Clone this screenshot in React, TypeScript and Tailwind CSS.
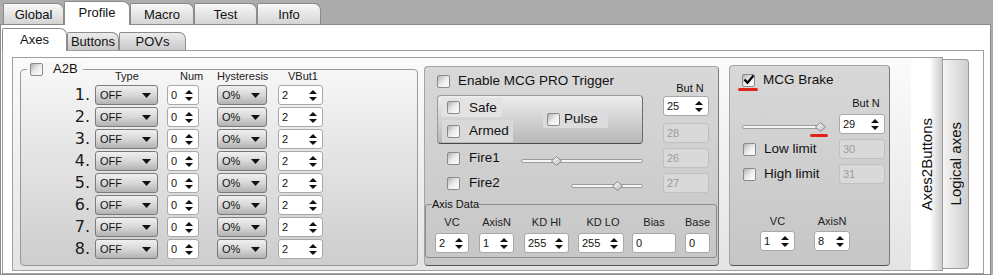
import React from "react";

function Check({ checked = false }: { checked?: boolean }) {
  return (
    <span className="relative block w-[13px] h-[13px] shrink-0 rounded-[2px] border border-[#8a8a8a] bg-linear-to-br from-[#b4b4b4] via-[#ececec] to-white">
      {checked && (
        <svg className="absolute left-[0px] top-[-1px]" width="12" height="11" viewBox="0 0 12 11">
          <path d="M1.5 5.5 L4.5 8.8 L10.5 1.5" stroke="#000" strokeWidth="2.2" fill="none" />
        </svg>
      )}
    </span>
  );
}

function Drop({ text, w }: { text: string; w: string }) {
  return (
    <div
      className={`${w} h-[20px] flex items-center justify-between rounded-[3px] border border-[#7a7a7a] bg-linear-to-b from-[#f0f0f0] via-[#d8d8d8] to-[#b2b2b2] pl-[4px] pr-[6px] text-[11px] leading-none`}
    >
      <span>{text}</span>
      <svg width="9" height="5" viewBox="0 0 9 5">
        <path d="M0 0H9L4.5 5Z" fill="#111" />
      </svg>
    </div>
  );
}

function Spin({ v, w }: { v: string; w: string }) {
  return (
    <div
      className={`${w} h-[20px] flex items-center justify-between rounded-[3px] border border-[#a8a8a8] bg-white pl-[3px] pr-[5px] text-[11px] leading-none`}
    >
      <span>{v}</span>
      <svg width="8" height="11" viewBox="0 0 8 11">
        <path d="M4 0L8 4H0Z M0 7H8L4 11Z" fill="#111" />
      </svg>
    </div>
  );
}

function Field({ v, w }: { v: string; w: string }) {
  return (
    <div className={`${w} h-[20px] flex items-center rounded-[3px] border border-[#a8a8a8] bg-white pl-[3px] text-[11px] leading-none`}>
      {v}
    </div>
  );
}

function Dis({ v }: { v: string }) {
  return (
    <div className="w-[46px] h-[20px] flex items-center rounded-[3px] border border-[#c0c0c0] bg-[#d9d9d9] pl-[3px] text-[11px] leading-none text-[#9c9c9c]">
      {v}
    </div>
  );
}

function Slider({ w, thumb, mark = false }: { w: string; thumb: string; mark?: boolean }) {
  return (
    <div className={`relative h-[10px] ${w}`}>
      <div className="absolute left-0 right-0 top-[3px] h-[4px] rounded-full border border-[#9c9c9c] bg-[#f6f6f6]" />
      <svg className={`absolute top-0 ${thumb}`} width="11" height="10" viewBox="0 0 11 10">
        <defs>
          <linearGradient id="tg" x1="0" y1="0" x2="1" y2="1">
            <stop offset="0" stopColor="#ffffff" />
            <stop offset="1" stopColor="#b8b8b8" />
          </linearGradient>
        </defs>
        <path d="M5.5 0.5 L10.5 5 L5.5 9.5 L0.5 5 Z" fill="url(#tg)" stroke="#8a8a8a" />
      </svg>
      {mark && <span className="absolute left-[68px] top-[12px] w-[18px] h-[3px] rounded-full bg-[#e2231a]" />}
    </div>
  );
}

function TopTab({ label, w, active = false }: { label: string; w: string; active?: boolean }) {
  return active ? (
    <div
      className={`${w} h-[24px] -mb-[1px] relative z-10 flex justify-center pt-[3px] rounded-tl-[2px] rounded-tr-[7px] border border-b-0 border-[#8b8b8b] bg-white text-[13px] leading-[15px]`}
    >
      {label}
    </div>
  ) : (
    <div
      className={`${w} h-[21px] flex justify-center pt-[3px] rounded-tl-[2px] rounded-tr-[7px] border border-b-0 border-[#8b8b8b] bg-linear-to-b from-[#f8f8f8] to-[#d4d4d4] text-[13px] leading-[15px]`}
    >
      {label}
    </div>
  );
}

function SubTab({ label, w, active = false }: { label: string; w: string; active?: boolean }) {
  return active ? (
    <div
      className={`${w} h-[23px] -mb-[1px] flex justify-center pt-[3px] rounded-tl-[2px] rounded-tr-[7px] border border-b-0 border-[#8b8b8b] bg-white text-[13px] leading-[15px]`}
    >
      {label}
    </div>
  ) : (
    <div
      className={`${w} h-[18px] flex justify-center pt-[1px] rounded-tl-[2px] rounded-tr-[7px] border border-b-0 border-[#8b8b8b] bg-linear-to-b from-[#ececec] to-[#c9c9c9] text-[13px] leading-[15px]`}
    >
      {label}
    </div>
  );
}

const rows = [1, 2, 3, 4, 5, 6, 7, 8];

export default function App() {
  return (
    <div className="w-[993px] h-[275px] overflow-hidden bg-[#acacac] flex flex-col font-['Liberation_Sans',Arial,sans-serif] text-[#111]">
      {/* top tabs */}
      <div className="h-[24px] shrink-0 flex items-end pl-[3px] relative z-10">
        <TopTab label="Global" w="w-[61px]" />
        <TopTab label="Profile" w="w-[66px]" active />
        <TopTab label="Macro" w="w-[64px]" />
        <TopTab label="Test" w="w-[63px]" />
        <TopTab label="Info" w="w-[64px]" />
      </div>

      {/* main panel */}
      <div className="flex-1 min-h-0 w-[991px] bg-white border border-[#8b8b8b] flex flex-col">
        <div className="h-[25px] shrink-0 flex items-end pl-[1px] relative z-10">
          <SubTab label="Axes" w="w-[65px]" active />
          <SubTab label="Buttons" w="w-[52px]" />
          <SubTab label="POVs" w="w-[67px]" />
        </div>

        <div className="ml-[1px] w-[982px] flex-1 border border-[#a0a0a0] bg-white">
          <div className="ml-[9px] mt-[6px] flex items-start">
            {/* page */}
            <div className="w-[899px] h-[214px] border border-r-0 border-[#a0a0a0] bg-linear-to-b from-[#fbfbfb] to-[#e4e4e4] flex items-start pl-[7px]">
              {/* A2B group */}
              <div className="relative mt-[11px] w-[398px] h-[197px] rounded-[4px] border border-[#9a9a9a] bg-linear-to-b from-[#f7f7f7] to-[#cdcdcd]">
                <div className="absolute left-[6px] top-[-8px] h-[14px] flex items-center pl-[3px] pr-[5px] bg-[#f7f7f7]">
                  <Check />
                  <span className="ml-[10px] text-[13px] leading-[14px]">A2B</span>
                </div>
                <div className="flex h-[12px] text-[11px] leading-[12px] text-[#222]">
                  <div className="w-[69px]" />
                  <div className="ml-[5px] w-[63px] pl-[20px]">Type</div>
                  <div className="ml-[9px] w-[32px] pl-[13px] whitespace-nowrap">Num</div>
                  <div className="ml-[18px] w-[50px] whitespace-nowrap">Hysteresis</div>
                  <div className="ml-[11px] w-[45px] pl-[10px]">VBut1</div>
                </div>
                <div className="mt-[3px] flex flex-col gap-[2px]">
                  {rows.map((n) => (
                    <div key={n} className="flex items-center h-[20px]">
                      <div className="w-[69px] text-right font-['DejaVu_Sans',sans-serif] text-[16px] leading-[20px] text-[#1a1a1a]">
                        {n}.
                      </div>
                      <div className="ml-[5px]">
                        <Drop text="OFF" w="w-[63px]" />
                      </div>
                      <div className="ml-[9px]">
                        <Spin v="0" w="w-[32px]" />
                      </div>
                      <div className="ml-[18px]">
                        <Drop text="O%" w="w-[50px]" />
                      </div>
                      <div className="ml-[11px]">
                        <Spin v="2" w="w-[45px]" />
                      </div>
                    </div>
                  ))}
                </div>
              </div>

              {/* MCG PRO Trigger panel */}
              <div className="ml-[6px] mt-[8px] w-[295px] h-[200px] rounded-[4px] border border-[#a4a4a4] border-r-[#7a7a7a] border-b-[#555555] bg-linear-to-b from-[#d8d8d8] to-[#c6c6c6] flex flex-col">
                <div className="flex pl-[12px] pt-[7px]">
                  <div className="w-[206px] flex flex-col">
                    <div className="flex items-center h-[14px]">
                      <Check />
                      <span className="ml-[8px] text-[13.5px] leading-[14px]">Enable MCG PRO Trigger</span>
                    </div>
                    <div className="mt-[7px] h-[49px] rounded-[4px] border border-[#9a9a9a] border-r-[#6c6c6c] border-b-[#4a4a4a] bg-linear-to-b from-[#ededed] to-[#b8b8b8] flex items-start pl-[4px] pt-[2px]">
                      <div className="flex flex-col w-[71px]">
                        <div className="w-[60px] h-[19px] bg-[#e3e3e3] flex items-center pl-[5px]">
                          <Check />
                          <span className="ml-[9px] text-[13.5px] leading-[14px]">Safe</span>
                        </div>
                        <div className="mt-[3px] w-[71px] h-[22px] bg-[#d9d9d9] flex items-center pl-[5px]">
                          <Check />
                          <span className="ml-[9px] text-[13.5px] leading-[14px]">Armed</span>
                        </div>
                      </div>
                      <div className="ml-[30px] mt-[12px] w-[65px] h-[18px] bg-[#dcdcdc] flex items-center pl-[4px]">
                        <Check />
                        <span className="ml-[4px] text-[13.5px] leading-[14px]">Pulse</span>
                      </div>
                    </div>
                    <div className="mt-[4px] h-[20px] flex items-center pl-[10px]">
                      <Check />
                      <span className="ml-[9px] text-[13.5px] leading-[14px]">Fire1</span>
                      <div className="ml-auto mt-[5px]">
                        <Slider w="w-[122px]" thumb="left-[30px]" />
                      </div>
                    </div>
                    <div className="mt-[5px] h-[20px] flex items-center pl-[10px]">
                      <Check />
                      <span className="ml-[9px] text-[13.5px] leading-[14px]">Fire2</span>
                      <div className="ml-auto mt-[5px]">
                        <Slider w="w-[72px]" thumb="left-[41px]" />
                      </div>
                    </div>
                  </div>
                  <div className="ml-[20px] w-[46px] flex flex-col pt-[8px]">
                    <div className="h-[12px] text-[11px] leading-[12px] text-center pl-[8px] whitespace-nowrap">But N</div>
                    <div className="mt-[2px]">
                      <Spin v="25" w="w-[46px]" />
                    </div>
                    <div className="mt-[7px]">
                      <Dis v="28" />
                    </div>
                    <div className="mt-[5px]">
                      <Dis v="26" />
                    </div>
                    <div className="mt-[5px]">
                      <Dis v="27" />
                    </div>
                  </div>
                </div>

                <fieldset className="mt-[6px] mr-[2px] px-[6px] pb-[4px] rounded-[3px] border border-[#8c8c8c]">
                  <legend className="text-[11px] leading-[11px] px-0">Axis Data</legend>
                  <div className="mt-[6px] flex pl-[3px] h-[12px] text-[11px] leading-[12px] text-[#222]">
                    <div className="w-[34px] text-center">VC</div>
                    <div className="ml-[10px] w-[35px] text-center">AxisN</div>
                    <div className="ml-[10px] w-[45px] text-center whitespace-nowrap">KD HI</div>
                    <div className="ml-[9px] w-[46px] text-center whitespace-nowrap pl-[4px]">KD LO</div>
                    <div className="ml-[8px] w-[44px] text-center">Bias</div>
                    <div className="ml-[9px] w-[25px] text-center">Base</div>
                  </div>
                  <div className="mt-[5px] flex pl-[3px]">
                    <Spin v="2" w="w-[34px]" />
                    <div className="ml-[10px]">
                      <Spin v="1" w="w-[35px]" />
                    </div>
                    <div className="ml-[10px]">
                      <Spin v="255" w="w-[45px]" />
                    </div>
                    <div className="ml-[9px]">
                      <Spin v="255" w="w-[46px]" />
                    </div>
                    <div className="ml-[8px]">
                      <Field v="0" w="w-[44px]" />
                    </div>
                    <div className="ml-[9px]">
                      <Field v="0" w="w-[25px]" />
                    </div>
                  </div>
                </fieldset>
              </div>

              {/* MCG Brake panel */}
              <div className="ml-[10px] mt-[7px] w-[161px] h-[201px] rounded-[4px] border border-[#a4a4a4] border-r-[#7a7a7a] border-b-[#555555] bg-linear-to-b from-[#d8d8d8] to-[#c6c6c6] flex flex-col pl-[12px] pt-[7px]">
                <div className="flex items-center h-[14px]">
                  <div className="relative">
                    <Check checked />
                    <span className="absolute left-[-4px] top-[14px] w-[20px] h-[3px] rounded-full bg-[#e2231a]" />
                  </div>
                  <span className="ml-[8px] text-[13.5px] leading-[14px]">MCG Brake</span>
                </div>
                <div className="mt-[10px] flex">
                  <div className="w-[84px] flex flex-col pt-[17px]">
                    <div className="h-[20px] flex items-center">
                      <div className="mt-[6px]">
                        <Slider w="w-[83px]" thumb="left-[73px]" mark />
                      </div>
                    </div>
                    <div className="mt-[5px] h-[20px] flex items-center pl-[1px]">
                      <Check />
                      <span className="ml-[8px] text-[13.5px] leading-[14px]">Low limit</span>
                    </div>
                    <div className="mt-[5px] h-[20px] flex items-center pl-[1px]">
                      <Check />
                      <span className="ml-[8px] text-[13.5px] leading-[14px]">High limit</span>
                    </div>
                  </div>
                  <div className="ml-[13px] w-[46px] flex flex-col">
                    <div className="h-[12px] text-[11px] leading-[12px] text-center pl-[8px] whitespace-nowrap">But N</div>
                    <div className="mt-[5px]">
                      <Spin v="29" w="w-[46px]" />
                    </div>
                    <div className="mt-[5px]">
                      <Dis v="30" />
                    </div>
                    <div className="mt-[5px]">
                      <Dis v="31" />
                    </div>
                  </div>
                </div>
                <div className="mt-[31px] flex pl-[18px] h-[12px] text-[11px] leading-[12px] text-[#222]">
                  <div className="w-[35px] text-center">VC</div>
                  <div className="ml-[19px] w-[36px] text-center">AxisN</div>
                </div>
                <div className="mt-[4px] flex pl-[18px]">
                  <Spin v="1" w="w-[35px]" />
                  <div className="ml-[19px]">
                    <Spin v="8" w="w-[36px]" />
                  </div>
                </div>
              </div>
            </div>

            {/* vertical tabs */}
            <div className="w-[32px] h-[214px] border border-l-0 border-[#a0a0a0] bg-linear-to-r from-white from-60% to-[#cdcdcd] flex items-center justify-center">
              <span className="[writing-mode:vertical-rl] rotate-180 text-[15px] leading-[15px] whitespace-nowrap">Axes2Buttons</span>
            </div>
            <div className="mt-[2px] w-[26px] h-[210px] rounded-r-[4px] border border-l-0 border-[#9a9a9a] bg-linear-to-r from-[#f4f4f4] to-[#cfcfcf] flex items-center justify-center">
              <span className="[writing-mode:vertical-rl] rotate-180 text-[15px] leading-[15px] whitespace-nowrap">Logical axes</span>
            </div>
          </div>
        </div>
      </div>
    </div>
  );
}
